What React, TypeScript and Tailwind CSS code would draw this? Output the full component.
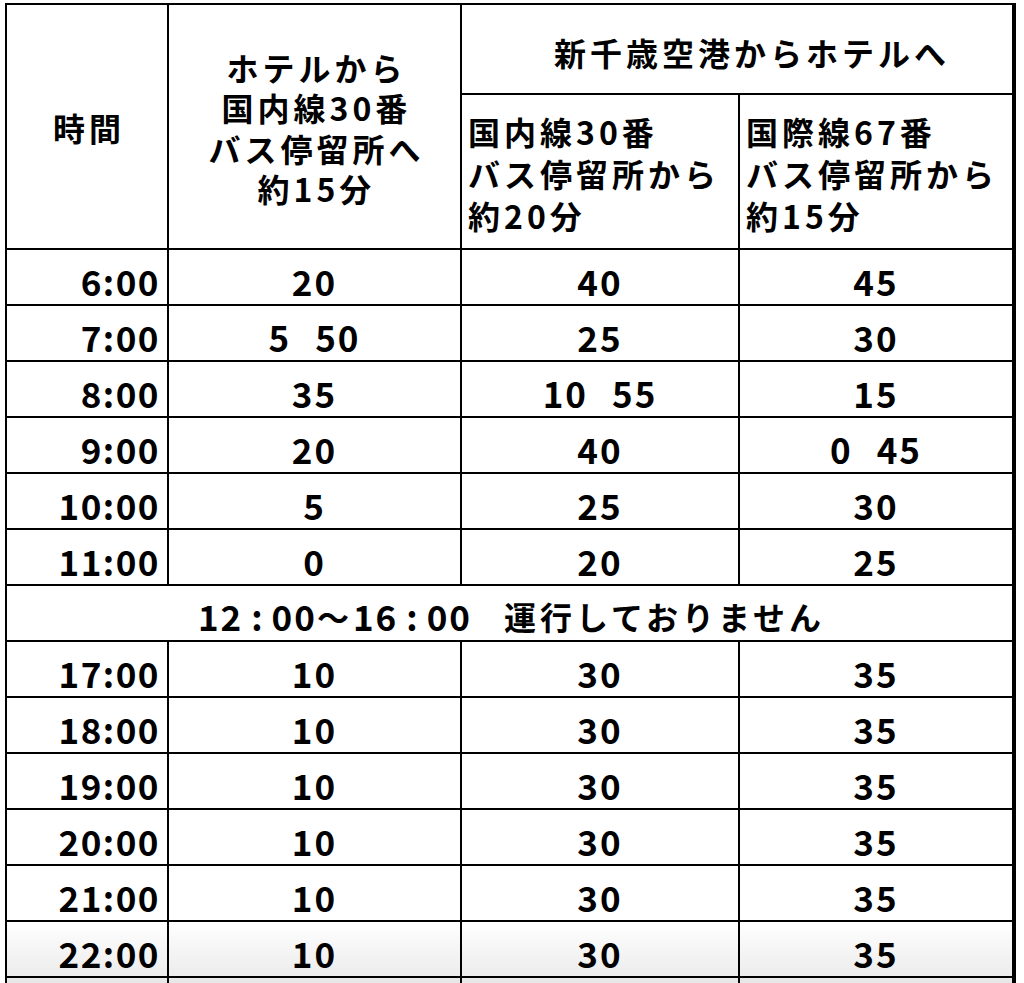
import React from "react";

const rowsA: [string, string, string, string][] = [
  ["6:00", "20", "40", "45"],
  ["7:00", "5\u00a0\u00a0\u200a50", "25", "30"],
  ["8:00", "35", "10\u00a0\u00a0\u200a55", "15"],
  ["9:00", "20", "40", "0\u00a0\u00a0\u200a45"],
  ["10:00", "5", "25", "30"],
  ["11:00", "0", "20", "25"],
];

const rowsB: [string, string, string, string][] = [
  ["17:00", "10", "30", "35"],
  ["18:00", "10", "30", "35"],
  ["19:00", "10", "30", "35"],
  ["20:00", "10", "30", "35"],
  ["21:00", "10", "30", "35"],
  ["22:00", "10", "30", "35"],
];

function DataRow({ r, last }: { r: [string, string, string, string]; last?: boolean }) {
  const bg = last ? "bg-gradient-to-b from-white to-[#ececec]" : "bg-white";
  return (
    <>
      <div className={`flex items-center justify-end pr-[7px] pt-[6px] border-r-2 border-b-2 border-black text-[35px] tracking-[1.5px] ${bg}`}>{r[0]}</div>
      <div className={`flex items-center justify-center pt-[6px] border-r-2 border-b-2 border-black text-[35px] tracking-[2px] ${bg}`}>{r[1]}</div>
      <div className={`flex items-center justify-center pt-[6px] border-r-2 border-b-2 border-black text-[35px] tracking-[2px] ${bg}`}>{r[2]}</div>
      <div className={`flex items-center justify-center pt-[6px] border-r-4 border-b-2 border-black text-[35px] tracking-[2px] ${bg}`}>{r[3]}</div>
    </>
  );
}

export default function App() {
  return (
    <div className="h-[983px] overflow-hidden bg-white">
      <div className="ml-[5px] mt-[3px] w-[1011px] grid grid-cols-[162px_293px_278px_276px] grid-rows-[90px_155px] auto-rows-[56px] border-l-2 border-t-2 border-black font-['Noto_Sans_CJK_JP',sans-serif] font-bold text-[32px] tracking-[4px] text-black leading-none">
        <div className="row-span-2 flex items-center justify-center pl-[4px] border-r-2 border-b-2 border-black">時間</div>
        <div className="row-span-2 flex flex-col items-center justify-center pl-[4px] pt-[2px] border-r-2 border-b-2 border-black leading-[40.5px]">
          <span>ホテルから</span>
          <span>国内線30番</span>
          <span>バス停留所へ</span>
          <span>約15分</span>
        </div>
        <div className="col-span-2 flex items-center justify-center pl-[30px] pt-[6px] border-r-4 border-b-2 border-black">新千歳空港からホテルへ</div>
        <div className="flex flex-col justify-center pl-[6px] pt-[3px] border-r-2 border-b-2 border-black leading-[42px]">
          <span>国内線30番</span>
          <span>バス停留所から</span>
          <span>約20分</span>
        </div>
        <div className="flex flex-col justify-center pl-[6px] pt-[3px] border-r-4 border-b-2 border-black leading-[42px]">
          <span>国際線67番</span>
          <span>バス停留所から</span>
          <span>約15分</span>
        </div>
        {rowsA.map((r) => (
          <DataRow key={r[0]} r={r} />
        ))}
        <div className="col-span-4 flex items-center justify-center pl-[4px] pt-[5px] border-r-4 border-b-2 border-black">
          <span className="text-[35px] tracking-[2px]">12</span>
          <span className="text-[35px] tracking-normal ml-[8px] mr-[9px]">:</span>
          <span className="text-[35px] tracking-[2px]">00</span>
          <span>〜</span>
          <span className="text-[35px] tracking-[2px]">16</span>
          <span className="text-[35px] tracking-normal ml-[8px] mr-[9px]">:</span>
          <span className="text-[35px] tracking-[2px]">00</span>
          <span className="w-[32px]"></span>
          <span>運行しておりません</span>
        </div>
        {rowsB.map((r, i) => (
          <DataRow key={r[0]} r={r} last={i === rowsB.length - 1} />
        ))}
        <div className="border-r-2 border-b-2 border-black bg-[#e8e8e8]"></div>
        <div className="border-r-2 border-b-2 border-black bg-[#e8e8e8]"></div>
        <div className="border-r-2 border-b-2 border-black bg-[#e8e8e8]"></div>
        <div className="border-r-4 border-b-2 border-black bg-[#e8e8e8]"></div>
      </div>
    </div>
  );
}
